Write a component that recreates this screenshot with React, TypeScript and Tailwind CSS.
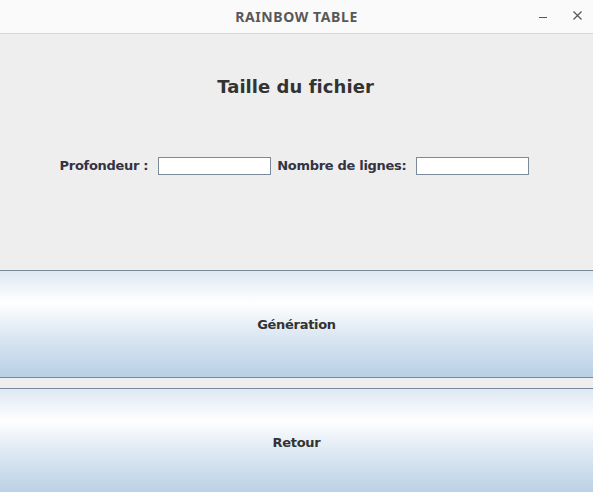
import React from "react";

const grad =
  "bg-[linear-gradient(to_bottom,#dde8f3_0%,#ffffff_30%,#dde8f3_60%,#b8cfe5_100%)]";

export default function App() {
  return (
    <div className="w-[593px] h-[492px] overflow-hidden bg-[#eeeeee] flex flex-col font-['DejaVu_Sans',sans-serif]">
      <div className="h-[34px] shrink-0 bg-[#fafafa] border-b border-[#d6d6d6] relative flex items-center justify-center">
        <span className="font-['Noto_Sans',sans-serif] font-bold text-[14px] text-[#585858] tracking-[0.6px] pb-[1px]">
          RAINBOW TABLE
        </span>
        <span className="absolute left-[539px] top-[17px] w-[8px] h-[1px] bg-[#555555]" />
        <svg className="absolute left-[573px] top-[11px]" width="9" height="9" viewBox="0 0 9 9">
          <path d="M0.5 0.5 L8.5 8.5 M8.5 0.5 L0.5 8.5" stroke="#555555" strokeWidth="1.2" />
        </svg>
      </div>
      <div className="h-[236px] shrink-0 flex flex-col items-center">
        <div className="mt-[42px] mr-[2px] h-[22px] leading-[22px] text-[18px] font-bold text-[#333333] tracking-[0.05px]">
          Taille du fichier
        </div>
        <div className="mt-[59px] mr-[4px] flex items-center h-[18px] text-[13px] font-bold text-[#333344] tracking-[-0.3px]">
          <span className="mr-[10px]">Profondeur :</span>
          <div className="w-[113px] h-[18px] bg-white border border-[#7a8a99]" />
          <span className="ml-[6px] mr-[10px]">Nombre de lignes:</span>
          <div className="w-[113px] h-[18px] bg-white border border-[#7a8a99]" />
        </div>
      </div>
      <div
        className={`h-[108px] shrink-0 border-y border-[#7a8a99] ${grad} flex items-center justify-center pt-[2px] text-[13px] font-bold text-[#333333] tracking-[-0.3px]`}
      >
        Génération
      </div>
      <div className="h-[10px] shrink-0" />
      <div
        className={`h-[108px] shrink-0 border-y border-[#7a8a99] ${grad} flex items-center justify-center pt-[2px] text-[13px] font-bold text-[#333333] tracking-[-0.3px]`}
      >
        Retour
      </div>
    </div>
  );
}
